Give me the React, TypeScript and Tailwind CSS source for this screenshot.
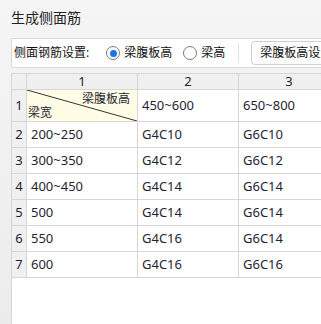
import React from "react";

const rows = [
  ["200~250", "G4C10", "G6C10"],
  ["300~350", "G4C12", "G6C12"],
  ["400~450", "G4C14", "G6C14"],
  ["500", "G4C14", "G6C14"],
  ["550", "G4C16", "G6C14"],
  ["600", "G4C16", "G6C16"],
];

const font = { fontFamily: '"Noto Sans", "Noto Sans CJK SC", sans-serif' };

function Radio({ checked }: { checked?: boolean }) {
  return (
    <span className="flex h-[14px] w-[14px] items-center justify-center rounded-full border border-[#7a7a7a] bg-white">
      {checked && <span className="h-[7px] w-[7px] rounded-full bg-[#1a73e8]" />}
    </span>
  );
}

export default function App() {
  return (
    <div
      className="flex h-[324px] w-[321px] flex-col overflow-hidden bg-gradient-to-b from-[#f5f5f5] to-[#ececec] text-[#1f2433]"
      style={font}
    >
      <div className="h-[38px] pl-[11px] pt-[6px] text-[14px] leading-[24px] text-[#222]">生成侧面筋</div>
      <div className="ml-[11px] flex h-[30px] shrink-0 items-center overflow-hidden border border-r-0 border-[#d9d9d9] bg-white pl-[2px] text-[12px] text-[#111]">
        <span className="whitespace-nowrap">侧面钢筋设置:</span>
        <span className="ml-[17px] flex items-center gap-[4px] whitespace-nowrap">
          <Radio checked />
          <span>梁腹板高</span>
        </span>
        <span className="ml-[11px] flex items-center gap-[4px] whitespace-nowrap">
          <Radio />
          <span>梁高</span>
        </span>
        <span className="ml-[13px] h-[20px] w-px shrink-0 bg-[#e0e0e0]" />
        <span className="ml-[12px] flex h-[24px] shrink-0 items-center whitespace-nowrap rounded-[4px] border border-[#cfcfcf] bg-[#fdfdfd] pl-[8px] pr-[10px]">
          梁腹板高设置
        </span>
      </div>
      <div className="mt-[5px] ml-[11px] flex-1 overflow-hidden border-l border-t border-[#d6d6d6] bg-white">
        <div className="grid w-[340px] grid-cols-[15px_111px_101px_101px] grid-rows-[16px_32px_repeat(6,26px)] text-[13px]">
          <div className="border-b border-r border-[#d6d6d6] bg-[#f0f0f0]" />
          {["1", "2", "3"].map((h) => (
            <div
              key={h}
              className="flex items-center justify-center border-b border-r border-[#d6d6d6] bg-[#f0f0f0] leading-none"
            >
              {h}
            </div>
          ))}
          <div className="flex items-center justify-center border-b border-r border-[#d6d6d6] bg-[#f0f0f0]">1</div>
          <div className="relative border-b border-r border-[#d6d6d6] bg-[#fffde6]">
            <svg className="absolute inset-0 h-full w-full" viewBox="0 0 110 31" preserveAspectRatio="none">
              <line x1="0" y1="0" x2="110" y2="31" stroke="#333" strokeWidth="1" />
            </svg>
            <span className="absolute right-[7px] top-[2px] text-[12px] leading-[14px]">梁腹板高</span>
            <span className="absolute left-[1px] bottom-[1px] text-[12px] leading-[14px]">梁宽</span>
          </div>
          <div className="flex items-center border-b border-r border-[#d6d6d6] pl-[4px]">450~600</div>
          <div className="flex items-center border-b border-r border-[#d6d6d6] pl-[4px]">650~800</div>
          {rows.map((r, i) => (
            <React.Fragment key={i}>
              <div className="flex items-center justify-center border-b border-r border-[#d6d6d6] bg-[#f0f0f0]">
                {i + 2}
              </div>
              {r.map((c, j) => (
                <div key={j} className="flex items-center border-b border-r border-[#d6d6d6] pl-[4px]">
                  {c}
                </div>
              ))}
            </React.Fragment>
          ))}
        </div>
      </div>
    </div>
  );
}
